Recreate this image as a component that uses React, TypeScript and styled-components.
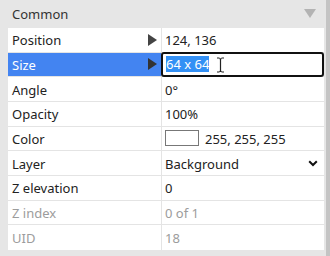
import styled, { createGlobalStyle } from "styled-components";

type Row = {
  label: string;
  value: string;
  kind?: "arrow" | "edit" | "color" | "select";
  muted?: boolean;
};

const rows: Row[] = [
  { label: "Position", value: "124, 136", kind: "arrow" },
  { label: "Size", value: "64 x 64", kind: "edit" },
  { label: "Angle", value: "0°" },
  { label: "Opacity", value: "100%" },
  { label: "Color", value: "255, 255, 255", kind: "color" },
  { label: "Layer", value: "Background", kind: "select" },
  { label: "Z elevation", value: "0" },
  { label: "Z index", value: "0 of 1", muted: true },
  { label: "UID", value: "18", muted: true },
];

export default function App() {
  const renderValue = (row: Row): JSX.Element => {
    if (row.kind === "edit") {
      return (
        <EditBox>
          <Selected>{row.value}</Selected>
          <IBeam width="9" height="16" viewBox="0 0 9 16">
            <path d="M1 1h2.5M5.5 1H8M4.5 2v12M1 15h2.5M5.5 15H8M3.5 1.5c.6 0 1 .4 1 1M5.5 1.5c-.6 0-1 .4-1 1M3.5 14.5c.6 0 1-.4 1-1M5.5 14.5c-.6 0-1-.4-1-1" stroke="#222" strokeWidth="1.2" fill="none" />
          </IBeam>
        </EditBox>
      );
    }
    return (
      <ValueCell $muted={row.muted}>
        {row.kind === "color" && <Swatch />}
        <Text>{row.value}</Text>
        {row.kind === "select" && (
          <Chevron width="10" height="7" viewBox="0 0 10 7">
            <path d="M1.2 1.2 5 5l3.8-3.8" stroke="#111" strokeWidth="2" fill="none" />
          </Chevron>
        )}
      </ValueCell>
    );
  };

  return (
    <Frame>
      <GlobalStyle />
      <Panel>
        <Header>
          <span>Common</span>
          <Collapse width="12" height="9" viewBox="0 0 12 9">
            <path d="M0 0h12L6 9z" fill="#b3b3b3" />
          </Collapse>
        </Header>
        <Table>
          {rows.map((row) => (
            <TableRow key={row.label}>
              <LabelCell $active={row.kind === "edit"} $muted={row.muted}>
                <Text>{row.label}</Text>
                {(row.kind === "arrow" || row.kind === "edit") && (
                  <svg width="9" height="12" viewBox="0 0 9 12">
                    <path d="M0 0l9 6-9 6z" fill={row.kind === "edit" ? "#333" : "#444"} />
                  </svg>
                )}
              </LabelCell>
              {renderValue(row)}
            </TableRow>
          ))}
        </Table>
      </Panel>
      <ScrollTrack />
    </Frame>
  );
}

const GlobalStyle = createGlobalStyle`
  body {
    margin: 0;
    background: #e6e6e6;
    font-family: "Segoe UI", "Noto Sans", "Open Sans", sans-serif;
  }
`;

const Frame = styled.div`
  display: flex;
  width: 330px;
  height: 256px;
  overflow: hidden;
  background: #e6e6e6;
`;

const Panel = styled.div`
  flex: 1;
  display: flex;
  flex-direction: column;
`;

const ScrollTrack = styled.div`
  width: 4px;
  background: #c4c4c4;
`;

const Text = styled.span`
  padding-top: 1px;
`;

const Header = styled.div`
  height: 28px;
  flex: none;
  display: flex;
  align-items: center;
  justify-content: space-between;
  padding: 0 10px 0 12px;
  font-size: 13px;
  color: #333;
`;

const Collapse = styled.svg`
  margin-bottom: 2px;
`;

const Table = styled.div`
  margin: 0 2px 0 8px;
  background: #fff;
  display: flex;
  flex-direction: column;
`;

const TableRow = styled.div`
  display: grid;
  grid-template-columns: 154px 1fr;
  height: 23.67px;
  border-bottom: 1px solid #e4e4e4;
  font-size: 13px;

  &:last-child {
    border-bottom: none;
    height: 24.67px;
  }
`;

const LabelCell = styled.div<{ $active?: boolean; $muted?: boolean }>`
  display: flex;
  align-items: center;
  justify-content: space-between;
  padding: 0 4px 0 4px;
  border-right: 1px solid #e4e4e4;
  background: ${(p) => (p.$active ? "#4384f1" : "transparent")};
  color: ${(p) => (p.$active ? "#fff" : p.$muted ? "#9c9c9c" : "#222")};
`;

const ValueCell = styled.div<{ $muted?: boolean }>`
  display: flex;
  align-items: center;
  gap: 6px;
  padding: 0 6px 0 3px;
  color: ${(p) => (p.$muted ? "#9c9c9c" : "#222")};
`;

const EditBox = styled.div`
  position: relative;
  display: flex;
  align-items: center;
  margin: -1px 0 -1px -1px;
  padding: 0 3px;
  border: 2px solid #111;
  border-radius: 3px;
  color: #fff;
`;

const Selected = styled.span`
  background: #3390f5;
  line-height: 15px;
  padding-top: 1px;
`;

const IBeam = styled.svg`
  position: absolute;
  left: 53px;
  top: 3px;
`;

const Swatch = styled.span`
  width: 32px;
  height: 14px;
  border: 1px solid #777;
  background: #fff;
  flex: none;
`;

const Chevron = styled.svg`
  margin-left: auto;
`;
